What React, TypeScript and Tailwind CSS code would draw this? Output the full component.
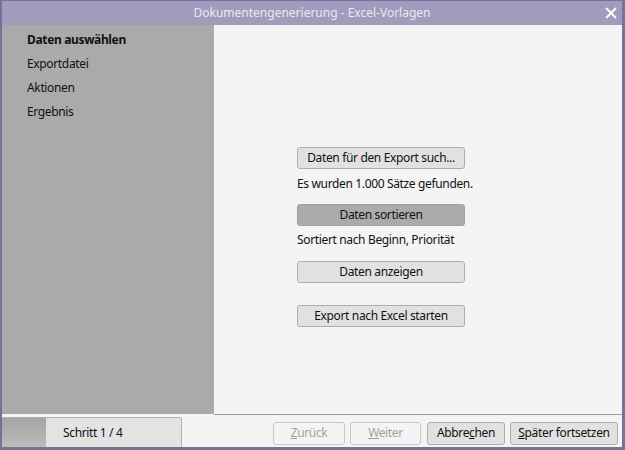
import React from 'react';

const steps = ['Daten auswählen', 'Exportdatei', 'Aktionen', 'Ergebnis'];

const ActionButton = ({ label, dark }: { label: string; dark?: boolean }) => (
  <button
    className={`w-[168px] h-[22px] rounded-[3px] border text-[12px] leading-none text-[#111] ${
      dark ? 'bg-[#ababab] border-[#a0a0a0]' : 'bg-[#e1e1e1] border-[#adadad]'
    }`}
  >
    {label}
  </button>
);

const FooterButton = ({
  children,
  disabled,
  width,
}: {
  children: React.ReactNode;
  disabled?: boolean;
  width: string;
}) => (
  <button
    className={`h-[23px] ${width} rounded-[3px] border text-[12px] leading-none ${
      disabled
        ? 'border-[#c8c8c8] bg-[#f4f4f4] text-[#a0a0a0]'
        : 'border-[#adadad] bg-[#e1e1e1] text-[#111]'
    }`}
  >
    {children}
  </button>
);

export default function App() {
  return (
    <div
      className="w-[625px] h-[450px] bg-[#7a7198] pl-[2px] pr-[3px] pb-[3px] pt-[1px] flex flex-col tracking-[-0.35px]"
      style={{ fontFamily: '"Noto Sans", "Open Sans", sans-serif' }}
    >
      {/* Title bar */}
      <div className="h-[24px] bg-[#a29bbd] relative flex items-center justify-center">
        <span className="text-[12px] text-[#ebe8f2] tracking-[0px]">
          Dokumentengenerierung - Excel-Vorlagen
        </span>
        <svg
          className="absolute right-[5px] top-[6px]"
          width="12"
          height="12"
          viewBox="0 0 12 12"
        >
          <path d="M1 1 L11 11 M11 1 L1 11" stroke="#ffffff" strokeWidth="1.8" />
        </svg>
      </div>

      {/* Main */}
      <div className="flex-1 flex bg-[#f4f4f4]">
        <div className="w-[212px] bg-[#aaaaaa] pt-[3px] pl-[25px]">
          {steps.map((s, i) => (
            <div
              key={s}
              className={`h-[24px] flex items-center text-[12px] text-[#111] ${
                i === 0 ? 'font-bold' : ''
              }`}
            >
              {s}
            </div>
          ))}
        </div>
        <div className="flex-1 flex flex-col pl-[83px] pt-[122px] text-[12px] text-[#111]">
          <ActionButton label="Daten für den Export such..." />
          <div className="h-[35px] pt-[7px] leading-[16px]">Es wurden 1.000 Sätze gefunden.</div>
          <ActionButton label="Daten sortieren" dark />
          <div className="h-[35px] pt-[6px] leading-[16px]">Sortiert nach Beginn, Priorität</div>
          <ActionButton label="Daten anzeigen" />
          <div className="h-[22px]" />
          <ActionButton label="Export nach Excel starten" />
        </div>
      </div>

      {/* Footer */}
      <div className="h-[33px] bg-[#f4f4f4] flex items-end relative">
        <div className="absolute left-[212px] right-0 top-0 h-px bg-[#a0a0a0]" />
        <div className="h-[30px] w-[180px] flex rounded-tr-[3px] border-t border-r border-[#b0b0b0] overflow-hidden">
          <div className="w-[44px] bg-gradient-to-b from-[#a4a4a4] to-[#bcbcbc]" />
          <div className="flex-1 bg-[#e3e3e3] flex items-center pl-[17px] text-[12px] text-[#111]">
            Schritt 1 / 4
          </div>
        </div>
        <div className="flex-1 flex justify-end items-center gap-[5px] pr-[4px] self-stretch pt-[5px]">
          <FooterButton disabled width="w-[72px]">
            <span className="underline">Z</span>urück
          </FooterButton>
          <FooterButton disabled width="w-[71px]">
            <span className="underline">W</span>eiter
          </FooterButton>
          <FooterButton width="w-[78px] ml-[1px]">
            Abbre<span className="underline">c</span>hen
          </FooterButton>
          <FooterButton width="w-[108px]">
            <span className="underline">S</span>päter fortsetzen
          </FooterButton>
        </div>
      </div>
    </div>
  );
}
